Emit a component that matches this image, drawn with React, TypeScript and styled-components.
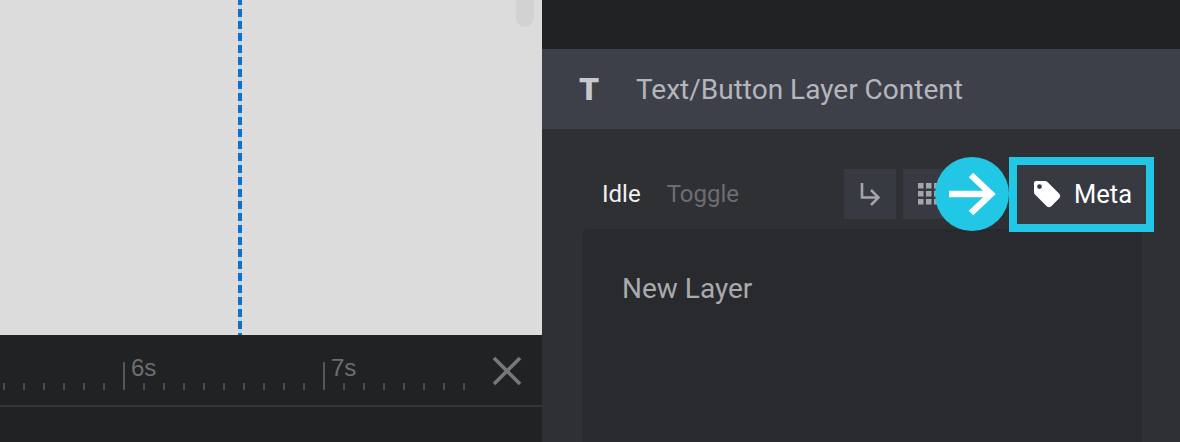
import React from 'react';
import styled, { createGlobalStyle } from 'styled-components';

const GlobalStyle = createGlobalStyle`
  html, body {
    margin: 0;
    padding: 0;
    background: #2f3033;
    font-family: Roboto, "Liberation Sans", sans-serif;
  }
`;

const Page = styled.div`
  display: flex;
  width: 1180px;
  height: 442px;
  overflow: hidden;
`;

const LeftColumn = styled.div`
  display: flex;
  flex-direction: column;
  width: 542px;
`;

const Canvas = styled.div`
  position: relative;
  height: 335px;
  overflow: hidden;
  background: #dcdcdc;
`;

const GuideLine = styled.div`
  position: absolute;
  left: 238px;
  top: -3px;
  bottom: 0;
  width: 4px;
  background: repeating-linear-gradient(to bottom, #1070d0 0 8px, #c4d6ea 8px 12px);
`;

const ScrollThumb = styled.div`
  position: absolute;
  left: 516px;
  top: -10px;
  width: 18px;
  height: 37px;
  border-radius: 9px;
  background: #d2d2d2;
`;

const Timeline = styled.div`
  flex: 1;
  background: #212224;
`;

const RulerRow = styled.div`
  display: flex;
  align-items: flex-start;
  justify-content: space-between;
  height: 70px;
  padding-right: 20px;
  border-bottom: 2px solid #36373a;
`;

const Ruler = styled.div`
  display: flex;
  align-items: flex-end;
  height: 55px;
  padding-left: 3px;
`;

const Tick = styled.div<{ $major?: boolean }>`
  position: relative;
  width: 2px;
  height: ${(p) => (p.$major ? 28 : 7)}px;
  margin-right: 18px;
  background: ${(p) => (p.$major ? '#55565a' : '#4b4c4f')};
`;

const TickLabel = styled.span`
  position: absolute;
  left: 8px;
  top: -7px;
  font-family: "Liberation Sans", Arial, sans-serif;
  font-size: 24px;
  line-height: 26px;
  color: #6d6e71;
`;

const CloseButton = styled.button`
  display: flex;
  margin: 21px 0 0;
  padding: 0;
  border: 0;
  background: none;
`;

const RightColumn = styled.div`
  display: flex;
  flex-direction: column;
  flex: 1;
  background: #2f3033;
`;

const TopBar = styled.div`
  height: 49px;
  background: #212224;
`;

const PanelHeader = styled.div`
  display: flex;
  align-items: center;
  height: 80px;
  background: #3e4049;
  color: #b4b6bd;
  font-size: 28px;
`;

const HeaderIcon = styled.div`
  width: 94px;
  padding-left: 37px;
  box-sizing: border-box;
  font-size: 32px;
  font-weight: 900;
  color: #c6c8ce;
`;

const ToolRow = styled.div`
  position: relative;
  z-index: 1;
  display: flex;
  align-items: center;
  box-sizing: border-box;
  height: 100px;
  padding: 30px 26px 0 60px;
`;

const Tab = styled.span<{ $active?: boolean }>`
  margin-right: 26px;
  font-size: 24px;
  color: ${(p) => (p.$active ? '#f0f0f2' : '#6c6d72')};
`;

const ToolButtons = styled.div`
  display: flex;
  align-items: center;
  gap: 7px;
  margin-left: auto;
`;

const IconButton = styled.div`
  display: flex;
  align-items: center;
  justify-content: center;
  width: 52px;
  height: 50px;
  background: #383a41;
`;

const MetaButton = styled.div`
  display: flex;
  align-items: center;
  gap: 13px;
  box-sizing: border-box;
  width: 145px;
  height: 75px;
  margin-left: 54px;
  padding-left: 16px;
  border: 8px solid #22c7e6;
  background: #383a42;
  color: #fff;
  font-size: 25.5px;
`;

const ArrowBadge = styled.div`
  position: absolute;
  left: 393px;
  top: 28px;
  display: flex;
  align-items: center;
  justify-content: center;
  width: 74px;
  height: 74px;
  border-radius: 50%;
  background: #22c7e6;
`;

const EditorCard = styled.div`
  flex: 1;
  margin: 0 38px 0 40px;
  padding: 39px 40px;
  border-radius: 6px 6px 0 0;
  background: #292a2d;
  color: #a9aaae;
  font-size: 28px;
  line-height: 42px;
`;

const TICK_LABELS: Record<number, string> = { 6: '6s', 16: '7s' };

const App = () => (
  <Page>
    <GlobalStyle />
    <LeftColumn>
      <Canvas>
        <GuideLine />
        <ScrollThumb />
      </Canvas>
      <Timeline>
        <RulerRow>
          <Ruler>
            {Array.from({ length: 24 }, (_, i) => (
              <Tick key={i} $major={i in TICK_LABELS}>
                {TICK_LABELS[i] && <TickLabel>{TICK_LABELS[i]}</TickLabel>}
              </Tick>
            ))}
          </Ruler>
          <CloseButton aria-label="Close">
            <svg width="30" height="30" viewBox="0 0 30 30">
              <path d="M2 2 L28 28 M28 2 L2 28" stroke="#77787b" strokeWidth="3.6" fill="none" />
            </svg>
          </CloseButton>
        </RulerRow>
      </Timeline>
    </LeftColumn>
    <RightColumn>
      <TopBar />
      <PanelHeader>
        <HeaderIcon>T</HeaderIcon>
        Text/Button Layer Content
      </PanelHeader>
      <ToolRow>
        <Tab $active>Idle</Tab>
        <Tab>Toggle</Tab>
        <ToolButtons>
          <IconButton>
            <svg width="20" height="24" viewBox="0 0 20 24">
              <path d="M2 1 V15.5 H18 M11 8 L18.5 15.5 L11 23" stroke="#a4a5aa" strokeWidth="2.6" fill="none" />
            </svg>
          </IconButton>
          <IconButton>
            <svg width="22" height="22" viewBox="0 0 22 22" fill="#a4a5aa">
              {[0, 8, 16].map((y) =>
                [0, 8, 16].map((x) => <rect key={`${x}-${y}`} x={x} y={y} width="5.5" height="5.5" />)
              )}
            </svg>
          </IconButton>
        </ToolButtons>
        <MetaButton>
          <svg width="28" height="28" viewBox="0 0 28 28">
            <path
              d="M1 3 Q1 1 3 1 H12 Q13.5 1 14.5 2 L26.5 14 Q28 16 26.5 18 L18 26.5 Q16 28 14 26.5 L2 14.5 Q1 13.5 1 12 Z M6.5 4.2 A2.4 2.4 0 1 0 6.5 9 A2.4 2.4 0 1 0 6.5 4.2 Z"
              fill="#fff"
              fillRule="evenodd"
            />
          </svg>
          Meta
        </MetaButton>
        <ArrowBadge>
          <svg width="48" height="48" viewBox="0 0 48 48">
            <path d="M1 24 H44 M23 5 L43 24 L23 43" stroke="#fff" strokeWidth="6.5" fill="none" />
          </svg>
        </ArrowBadge>
      </ToolRow>
      <EditorCard>New Layer</EditorCard>
    </RightColumn>
  </Page>
);

export default App;
